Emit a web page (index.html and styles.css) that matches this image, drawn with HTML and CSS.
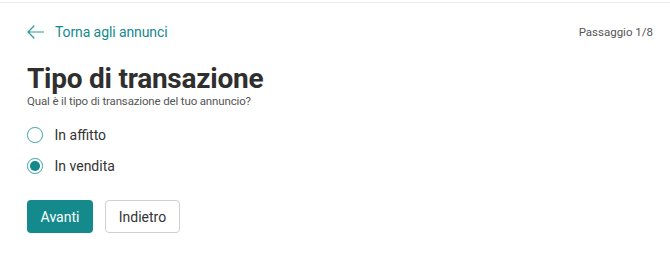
FILE: index.html
```html
<!DOCTYPE html>
<html lang="it">
<head>
<meta charset="utf-8">
<link rel="stylesheet" href="styles.css">
</head>
<body>
<div class="topbar"></div>
<div class="page">
  <div class="nav">
    <a class="back" href="#">
      <svg class="arrow" width="17" height="14" viewBox="0 0 17 14"><path d="M16.5 7H1M7 1L1 7l6 6" fill="none" stroke="#2a9a9c" stroke-width="1.2" stroke-linecap="round" stroke-linejoin="round"/></svg>
      <span>Torna agli annunci</span>
    </a>
    <span class="step">Passaggio 1/8</span>
  </div>
  <h1 class="title">Tipo di transazione</h1>
  <p class="subtitle">Qual è il tipo di transazione del tuo annuncio?</p>
  <div class="options">
    <label class="option"><span class="radio"></span><span>In affitto</span></label>
    <label class="option"><span class="radio checked"></span><span>In vendita</span></label>
  </div>
  <div class="actions">
    <button class="btn primary">Avanti</button>
    <button class="btn secondary">Indietro</button>
  </div>
</div>
</body>
</html>
```
FILE: styles.css
```css
body {
  margin: 0;
  font-family: Roboto, "Noto Sans", sans-serif;
  color: #333;
  background: #fff;
}
.topbar {
  height: 2px;
  border-bottom: 1px solid #ececec;
}
.page {
  padding: 0 17px 0 27px;
}
.nav {
  display: flex;
  align-items: center;
  justify-content: space-between;
  height: 56px;
  margin-top: 1px;
}
.back {
  display: flex;
  align-items: center;
  gap: 11px;
  text-decoration: none;
  color: #148a8c;
  font-size: 14px;
  letter-spacing: -0.1px;
}
.arrow { display: block; }
.step {
  font-size: 11.5px;
  color: #555;
}
.title {
  margin: 3px 0 0;
  font-size: 28px;
  font-weight: 700;
  line-height: 32px;
  color: #2f2f2f;
  letter-spacing: -0.25px;
}
.subtitle {
  margin: 0;
  font-size: 11.5px;
  line-height: 13px;
  color: #555;
  letter-spacing: -0.15px;
}
.options {
  display: flex;
  flex-direction: column;
  gap: 13px;
  margin-top: 18px;
}
.option {
  display: flex;
  align-items: center;
  gap: 12px;
  font-size: 14px;
  height: 18px;
  color: #333;
}
.radio {
  width: 13.5px;
  height: 13.5px;
  border: 1.4px solid #3fa3a5;
  border-radius: 50%;
  box-sizing: content-box;
  display: flex;
  align-items: center;
  justify-content: center;
}
.radio.checked::after {
  content: "";
  width: 9.5px;
  height: 9.5px;
  border-radius: 50%;
  background: #148a8c;
}
.actions {
  display: flex;
  gap: 12px;
  margin-top: 25px;
}
.btn {
  height: 33px;
  border-radius: 4px;
  font-family: inherit;
  font-size: 14px;
  padding: 0 12px;
  cursor: pointer;
}
.primary {
  background: #148a8c;
  color: #fff;
  border: none;
  width: 66px;
}
.secondary {
  background: #fff;
  color: #333;
  border: 1px solid #d0d0d0;
  width: 75px;
}
```
